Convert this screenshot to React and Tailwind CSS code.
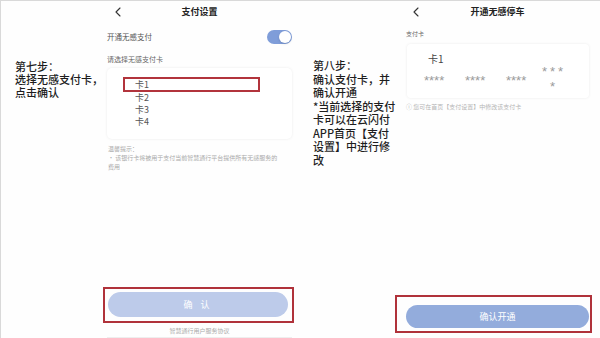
import React from 'react';

const font = { fontFamily: '"Noto Sans CJK SC", "Noto Sans", sans-serif' };

function Chevron() {
  return (
    <svg width="6" height="10" viewBox="0 0 6 10" fill="none">
      <path d="M5 1L1 5l4 4" stroke="#333" strokeWidth="1.1" strokeLinecap="round" strokeLinejoin="round" />
    </svg>
  );
}

function Header({ title, arrowPad }) {
  return (
    <div className="h-[22px] grid grid-cols-[1fr_auto_1fr] items-center">
      <div className={arrowPad}>
        <Chevron />
      </div>
      <div className="text-[9px] font-bold text-[#222]">{title}</div>
      <div />
    </div>
  );
}

function StepText({ lines, className }) {
  return (
    <div className={className}>
      {lines.map((l) => (
        <div key={l} className="whitespace-nowrap">
          {l}
        </div>
      ))}
    </div>
  );
}

export default function App() {
  return (
    <div
      style={font}
      className="w-[600px] h-[338px] flex bg-[#fefefe] border-t border-l border-[#d9d9d9] overflow-hidden"
    >
      {/* Step 7 */}
      <div className="w-[299px] flex shrink-0">
        <StepText
          className="w-[99px] pl-[14px] pt-[59px] text-[11px] leading-[13px] font-medium text-[#1e1e1e]"
          lines={['第七步：', '选择无感支付卡，', '点击确认']}
        />
        <div className="w-[200px] flex flex-col pl-[7px] pr-[8px]">
          <Header title="支付设置" arrowPad="pl-[8px]" />
          <div className="mt-[6px] h-[15px] flex items-center justify-between">
            <span className="text-[7.5px] text-[#555]">开通无感支付</span>
            <div className="w-[25px] h-[14px] rounded-full bg-[#7f9dd9] flex items-center justify-end pr-[1px]">
              <div className="w-[12px] h-[12px] rounded-full bg-white shadow-sm" />
            </div>
          </div>
          <div className="mt-[11px] text-[7px] leading-[9px] text-[#666]">请选择无感支付卡</div>
          <div className="mt-[4px] h-[71px] rounded-[5px] bg-white shadow-[0_0_3px_rgba(0,0,0,0.08)] pt-[9px] text-[9px] text-[#555]">
            <div className="ml-[16px] w-[137px] h-[15px] border-2 border-[#b2343c] pl-[10px] flex items-center">
              卡1
            </div>
            {['卡2', '卡3', '卡4'].map((c) => (
              <div key={c} className="h-[12px] pl-[28px] flex items-center">
                {c}
              </div>
            ))}
          </div>
          <div className="mt-[5px] pl-[1px] text-[6px] leading-[9px] text-[#aaa]">
            <div>温馨提示：</div>
            <div className="whitespace-nowrap">• 该银行卡将被用于支付当前智慧通行平台提供所有无感服务的</div>
            <div>费用</div>
          </div>
          <div className="mt-auto -ml-[4px] -mr-[2px] border-2 border-[#b0323a] pt-[3px] pb-[4px] pl-[3px] pr-[4px]">
            <div className="h-[25px] rounded-full bg-[#bdcbea] flex items-center justify-center text-[9px] text-white tracking-[3px]">
              确 认
            </div>
          </div>
          <div className="h-[15px] pt-[3px] text-center text-[6px] text-[#aaa] border-b border-[#eee]">
            智慧通行用户服务协议
          </div>
        </div>
      </div>

      {/* Step 8 */}
      <div className="w-[300px] flex shrink-0">
        <StepText
          className="w-[100px] pl-[13px] pt-[58px] text-[11px] leading-[13.5px] font-medium text-[#1e1e1e]"
          lines={[
            '第八步：',
            '确认支付卡，并',
            '确认开通',
            '*当前选择的支付',
            '卡可以在云闪付',
            'APP首页【支付',
            '设置】中进行修',
            '改',
          ]}
        />
        <div className="w-[200px] flex flex-col pl-[6px] pr-[11px]">
          <Header title="开通无感停车" arrowPad="pl-[7px]" />
          <div className="mt-[7px] text-[6px] leading-[8px] text-[#666]">支付卡</div>
          <div className="mt-[6px] ml-[1px] h-[54px] rounded-[4px] bg-white shadow-[0_0_3px_rgba(0,0,0,0.08)] pt-[8px]">
            <div className="h-[12px] pl-[21px] flex items-center text-[10px] text-[#444]">卡1</div>
            <div className="h-[30px] flex items-center pl-[17px] font-['Liberation_Sans',sans-serif] text-[13px] leading-[12px] text-[#9a9a9a] whitespace-nowrap">
              <span className="w-[41px] pt-[4px]">****</span>
              <span className="w-[41px] pt-[4px]">****</span>
              <span className="w-[34px] pt-[4px]">****</span>
              <div className="w-[28px] text-center leading-[15px] tracking-[3px]">
                <div>***</div>
                <div>*</div>
              </div>
            </div>
          </div>
          <div className="mt-[4px] text-[6px] leading-[9px] text-[#b5b5b5] whitespace-nowrap">
            ⓘ 您可在首页【支付设置】中修改该支付卡
          </div>
          <div className="mt-auto mb-[5px] -ml-[11px] -mr-[3px] border-2 border-[#b0323a] pt-[8px] pb-[3px] pl-[9px] pr-[1px]">
            <div className="h-[23px] rounded-full bg-[#93acdc] flex items-center justify-center text-[9px] text-white">
              确认开通
            </div>
          </div>
        </div>
      </div>
    </div>
  );
}
